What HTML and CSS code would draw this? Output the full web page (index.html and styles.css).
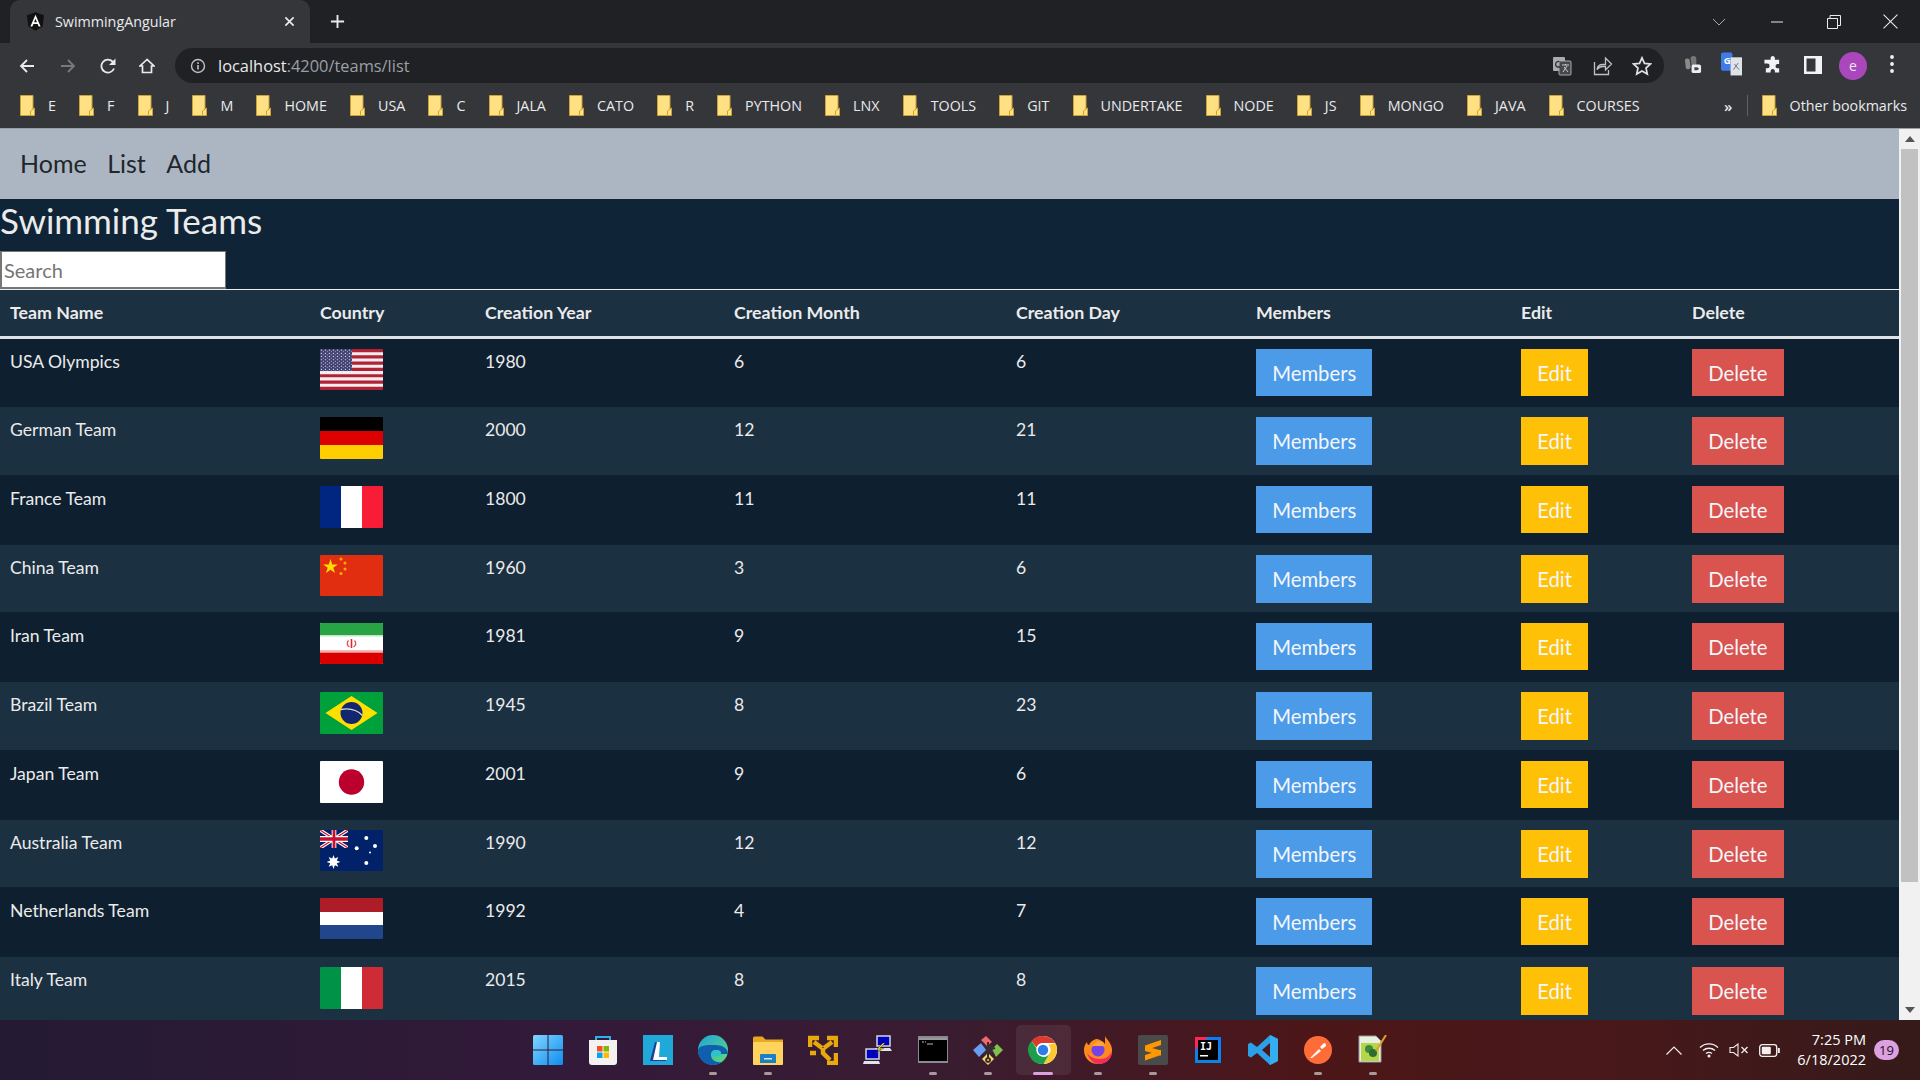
FILE: index.html
```html
<!DOCTYPE html>
<html lang="en">
<head>
<meta charset="utf-8">
<title>SwimmingAngular</title>
<link rel="stylesheet" href="styles.css">
</head>
<body>
<svg class="defs" width="0" height="0" aria-hidden="true">
  <defs>
    <symbol id="folder" viewBox="0 0 15 21">
      <path d="M.5.5h12.5v20H.5z" fill="#ffe083" stroke="#c9a23a"/>
      <path d="M14.500 13v7.500H10.500V16z" fill="#ffe083" stroke="#c9a23a"/>
    </symbol>
    <pattern id="stars" width="4" height="3.200" patternUnits="userSpaceOnUse">
      <rect x=".8" y=".6" width="1.300" height="1.100" fill="#d7d9e6"/>
      <rect x="2.800" y="2.200" width="1.100" height=".9" fill="#b8bbd0"/>
    </pattern>
    <symbol id="uj" viewBox="0 0 60 30" preserveAspectRatio="none">
      <rect width="60" height="30" fill="#012169"/>
      <path d="M0 0l60 30M60 0L0 30" stroke="#fff" stroke-width="6"/>
      <path d="M0 0l60 30M60 0L0 30" stroke="#c8102e" stroke-width="2"/>
      <path d="M30 0v30M0 15h60" stroke="#fff" stroke-width="10"/>
      <path d="M30 0v30M0 15h60" stroke="#c8102e" stroke-width="6"/>
    </symbol>
  </defs>
</svg>

<header class="tabstrip">
  <div class="tab">
    <svg class="favicon" viewBox="0 0 20 22"><path d="M10 0L0 3.500l1.600 13.300L10 22l8.400-5.200L20 3.500z" fill="#111"/><path d="M10 3L4 17h2.300l1.200-3h5l1.200 3H16zm-1.700 9L10 7.800 11.700 12z" fill="#fff"/></svg>
    <span class="tab-title">SwimmingAngular</span>
    <svg class="tab-close" viewBox="0 0 12 12"><path d="M1.500 1.500l9 9M10.500 1.500l-9 9" stroke="#e8eaed" stroke-width="1.800"/></svg>
  </div>
  <svg class="new-tab" viewBox="0 0 16 16"><path d="M8 1v14M1 8h14" stroke="#e8eaed" stroke-width="2"/></svg>
  <div class="window-controls">
    <svg class="wc chevron" viewBox="0 0 14 8"><path d="M1 1l6 6 6-6" fill="none" stroke="#aaa" stroke-width="1"/></svg>
    <svg class="wc min" viewBox="0 0 14 14"><path d="M1 7h12" stroke="#e8eaed" stroke-width="1"/></svg>
    <svg class="wc restore" viewBox="0 0 14 14"><path d="M.5 3.500h10v10H.5zM3 3.500V.5h10.500v10H10.500" fill="none" stroke="#e8eaed"/></svg>
    <svg class="wc close" viewBox="0 0 14 14"><path d="M.5.5l13 13M13.500.5l-13 13" stroke="#e8eaed"/></svg>
  </div>
</header>

<div class="toolbar">
  <svg class="tb back" viewBox="0 0 16 16"><path d="M15 8H2M8 2L2 8l6 6" fill="none" stroke="#e8eaed" stroke-width="1.800"/></svg>
  <svg class="tb fwd" viewBox="0 0 16 16"><path d="M1 8h13M8 2l6 6-6 6" fill="none" stroke="#77797c" stroke-width="1.800"/></svg>
  <svg class="tb reload" viewBox="0 0 16 16"><path d="M14 10.500A6.500 6.500 0 1 1 12.500 3.500L14 5" fill="none" stroke="#e8eaed" stroke-width="1.800"/><path d="M15.500 .5v6.500H9z" fill="#e8eaed"/></svg>
  <svg class="tb home" viewBox="0 0 16 16"><path d="M8 1.500L1 8h2.500v6.500h9V8H15z" fill="none" stroke="#e8eaed" stroke-width="1.700"/></svg>
  <div class="omnibox">
    <svg class="info" viewBox="0 0 16 16"><circle cx="8" cy="8" r="6.500" fill="none" stroke="#bdc1c6" stroke-width="1.400"/><path d="M7.200 7h1.600v4.500H7.200zM7.200 4.300h1.600v1.600H7.200z" fill="#bdc1c6"/></svg>
    <span class="url"><span class="host">localhost</span>:4200/teams/list</span>
    <svg class="omni-icon translate" viewBox="0 0 20 20"><rect x="1" y="1" width="12" height="14" rx="1" fill="#a9abad"/><rect x="7" y="5" width="12" height="14" rx="1" fill="#45474a" stroke="#a9abad"/><path d="M9.500 3.500A3 3 0 1 0 10 9H7" fill="none" stroke="#333" stroke-width="1.300" transform="translate(-2 2)"/><path d="M10 9h7M13.500 8v1M11 16l4-6M12 11l4 5" stroke="#c8cacc" stroke-width="1" fill="none"/></svg>
    <svg class="omni-icon share" viewBox="0 0 20 20"><path d="M13 9.500H10c-3 0-5 2-5.500 5 1.500-2 3-3 5.500-3h3v3.500l6-6-6-6v3.500z" fill="none" stroke="#bdc1c6" stroke-width="1.300" transform="translate(-.5 -1)"/><path d="M1.500 6v12.500h14V14" fill="none" stroke="#bdc1c6" stroke-width="1.300"/></svg>
    <svg class="omni-icon star" viewBox="0 0 20 20"><path d="M10 1.800l2.500 5.600 6 .6-4.500 4 1.300 6-5.300-3.100L4.700 18l1.300-6-4.500-4 6-.6z" fill="none" stroke="#dfe1e5" stroke-width="1.700"/></svg>
  </div>
  <svg class="ext ext-a" viewBox="0 0 20 20"><path d="M2 5a3 3 0 0 1 5 0l1 8a3 3 0 0 1-5 1z" fill="#8a8a8a"/><path d="M8 4a3 3 0 0 1 6 0v7H9z" fill="#777"/><rect x="9" y="10" width="10" height="9" rx="2" fill="#eee"/><path d="M12 13h3l2 1.500-2 1.500h-3z" fill="#444"/></svg>
  <svg class="ext ext-b" viewBox="0 0 22 24"><path d="M2 0h9l1 2v17H2a2 2 0 0 1-2-2V2a2 2 0 0 1 2-2z" fill="#3f7cea"/><rect x="10" y="5" width="12" height="19" fill="#dfe3e8"/><text class="ext-g" x="3" y="12">G</text><path d="M13 18l5-7M14 12l5 6" stroke="#6b7480"/></svg>
  <svg class="ext puzzle" viewBox="0 0 20 20"><path d="M8 3a2.300 2.300 0 0 1 4.500 0V5H17v4.500h-2a2.300 2.300 0 0 0 0 4.500h2v4.500H12.500v-2a2.300 2.300 0 0 0-4.500 0v2H3v-4.500h1.500a2.500 2.500 0 0 0 0-5H1.500V5H8z" fill="#f1f3f4"/></svg>
  <svg class="ext side" viewBox="0 0 18 18"><path d="M0 0h18v18H0zM2.500 2.500v13h9v-13z" fill="#f1f3f4" fill-rule="evenodd"/></svg>
  <div class="avatar">e</div>
  <svg class="menu" viewBox="0 0 4 18"><circle cx="2" cy="2" r="1.900" fill="#f1f3f4"/><circle cx="2" cy="9" r="1.900" fill="#f1f3f4"/><circle cx="2" cy="16" r="1.900" fill="#f1f3f4"/></svg>
</div>

<nav class="bookmarks">
  <a class="bm"><svg class="bm-folder"><use href="#folder"/></svg><span>E</span></a>
  <a class="bm"><svg class="bm-folder"><use href="#folder"/></svg><span>F</span></a>
  <a class="bm"><svg class="bm-folder"><use href="#folder"/></svg><span>J</span></a>
  <a class="bm"><svg class="bm-folder"><use href="#folder"/></svg><span>M</span></a>
  <a class="bm"><svg class="bm-folder"><use href="#folder"/></svg><span>HOME</span></a>
  <a class="bm"><svg class="bm-folder"><use href="#folder"/></svg><span>USA</span></a>
  <a class="bm"><svg class="bm-folder"><use href="#folder"/></svg><span>C</span></a>
  <a class="bm"><svg class="bm-folder"><use href="#folder"/></svg><span>JALA</span></a>
  <a class="bm"><svg class="bm-folder"><use href="#folder"/></svg><span>CATO</span></a>
  <a class="bm"><svg class="bm-folder"><use href="#folder"/></svg><span>R</span></a>
  <a class="bm"><svg class="bm-folder"><use href="#folder"/></svg><span>PYTHON</span></a>
  <a class="bm"><svg class="bm-folder"><use href="#folder"/></svg><span>LNX</span></a>
  <a class="bm"><svg class="bm-folder"><use href="#folder"/></svg><span>TOOLS</span></a>
  <a class="bm"><svg class="bm-folder"><use href="#folder"/></svg><span>GIT</span></a>
  <a class="bm"><svg class="bm-folder"><use href="#folder"/></svg><span>UNDERTAKE</span></a>
  <a class="bm"><svg class="bm-folder"><use href="#folder"/></svg><span>NODE</span></a>
  <a class="bm"><svg class="bm-folder"><use href="#folder"/></svg><span>JS</span></a>
  <a class="bm"><svg class="bm-folder"><use href="#folder"/></svg><span>MONGO</span></a>
  <a class="bm"><svg class="bm-folder"><use href="#folder"/></svg><span>JAVA</span></a>
  <a class="bm"><svg class="bm-folder"><use href="#folder"/></svg><span>COURSES</span></a>
  <span class="bm-more">»</span>
  <span class="bm-sep"></span>
  <a class="bm bm-other"><svg class="bm-folder"><use href="#folder"/></svg><span>Other bookmarks</span></a>
</nav>

<div class="viewport">
  <main class="page">
    <div class="navbar">
      <a class="nav-link">Home</a>
      <a class="nav-link">List</a>
      <a class="nav-link">Add</a>
    </div>
    <h2 class="title">Swimming Teams</h2>
    <input class="search" type="text" placeholder="Search">
    <table class="teams">
      <thead>
        <tr><th>Team Name</th><th>Country</th><th>Creation Year</th><th>Creation Month</th><th>Creation Day</th><th>Members</th><th>Edit</th><th>Delete</th></tr>
      </thead>
      <tbody>
        <tr>
          <td>USA Olympics</td>
          <td><svg class="flag" viewBox="0 0 63 41">
            <rect width="63" height="41" fill="#b22234"/>
            <path d="M0 4.700h63M0 11h63M0 17.300h63M0 23.600h63M0 29.900h63M0 36.200h63" stroke="#f2eef0" stroke-width="3.100"/>
            <rect width="32" height="22" fill="#3c3b6e"/><rect width="32" height="22" fill="url(#stars)"/>
          </svg></td>
          <td>1980</td><td>6</td><td>6</td>
          <td><button class="btn members">Members</button></td><td><button class="btn edit">Edit</button></td><td><button class="btn delete">Delete</button></td>
        </tr>
        <tr>
          <td>German Team</td>
          <td><svg class="flag" viewBox="0 0 63 42"><rect width="63" height="14" fill="#000"/><rect y="14" width="63" height="14" fill="#dd0000"/><rect y="28" width="63" height="14" fill="#ffce00"/></svg></td>
          <td>2000</td><td>12</td><td>21</td>
          <td><button class="btn members">Members</button></td><td><button class="btn edit">Edit</button></td><td><button class="btn delete">Delete</button></td>
        </tr>
        <tr>
          <td>France Team</td>
          <td><svg class="flag" viewBox="0 0 63 42"><rect width="21" height="42" fill="#002681"/><rect x="21" width="21" height="42" fill="#fff"/><rect x="42" width="21" height="42" fill="#f81c36"/></svg></td>
          <td>1800</td><td>11</td><td>11</td>
          <td><button class="btn members">Members</button></td><td><button class="btn edit">Edit</button></td><td><button class="btn delete">Delete</button></td>
        </tr>
        <tr>
          <td>China Team</td>
          <td><svg class="flag" viewBox="0 0 63 41">
            <rect width="63" height="41" fill="#e12d10"/>
            <path d="M10.500 4l1.700 5.400h5.600l-4.500 3.300 1.700 5.300-4.500-3.300L6 18l1.700-5.300-4.500-3.300h5.600z" fill="#ffde00"/>
            <circle cx="21" cy="4" r="1.500" fill="#f7b500"/><circle cx="25" cy="8" r="1.500" fill="#f7b500"/><circle cx="25" cy="14" r="1.500" fill="#f7b500"/><circle cx="21" cy="18.500" r="1.500" fill="#f7b500"/>
          </svg></td>
          <td>1960</td><td>3</td><td>6</td>
          <td><button class="btn members">Members</button></td><td><button class="btn edit">Edit</button></td><td><button class="btn delete">Delete</button></td>
        </tr>
        <tr>
          <td>Iran Team</td>
          <td><svg class="flag" viewBox="0 0 63 41">
            <rect width="63" height="41" fill="#fff"/><rect width="63" height="12" fill="#29a445"/><rect y="12" width="63" height="1.500" fill="#bfe3c6"/>
            <rect y="27" width="63" height="1.500" fill="#f6b9b9"/><rect y="30" width="63" height="11" fill="#da0000"/><rect y="28.500" width="63" height="1.500" fill="#ee8080"/>
            <path d="M28.500 17.500c-2 2-1.500 5.500 1 6.500M34.500 17.500c2 2 1.500 5.500-1 6.500" fill="none" stroke="#e2484a" stroke-width="1.300"/><rect x="30.700" y="16" width="1.600" height="9" fill="#d92b2d"/>
          </svg></td>
          <td>1981</td><td>9</td><td>15</td>
          <td><button class="btn members">Members</button></td><td><button class="btn edit">Edit</button></td><td><button class="btn delete">Delete</button></td>
        </tr>
        <tr>
          <td>Brazil Team</td>
          <td><svg class="flag" viewBox="0 0 63 42">
            <rect width="63" height="42" fill="#00a03b"/><path d="M5.500 21L31.500 4l26 17-26 17z" fill="#fedf00"/>
            <circle cx="31.500" cy="21" r="11" fill="#13266f"/><path d="M21 17.500c8-1.500 16 .5 21.500 6" fill="none" stroke="#cfe0cf" stroke-width="1.300"/>
          </svg></td>
          <td>1945</td><td>8</td><td>23</td>
          <td><button class="btn members">Members</button></td><td><button class="btn edit">Edit</button></td><td><button class="btn delete">Delete</button></td>
        </tr>
        <tr>
          <td>Japan Team</td>
          <td><svg class="flag" viewBox="0 0 63 42"><rect width="63" height="42" fill="#fff"/><circle cx="31.500" cy="21" r="12.700" fill="#bc002d"/></svg></td>
          <td>2001</td><td>9</td><td>6</td>
          <td><button class="btn members">Members</button></td><td><button class="btn edit">Edit</button></td><td><button class="btn delete">Delete</button></td>
        </tr>
        <tr>
          <td>Australia Team</td>
          <td><svg class="flag" viewBox="0 0 63 41">
            <rect width="63" height="41" fill="#012169"/><use href="#uj" width="28" height="18"/>
            <path d="M13.500 25l1.300 3.600 3.500-1.500-1.500 3.500 3.600 1.400-3.600 1.300 1.500 3.500-3.500-1.500-1.300 3.600-1.300-3.600-3.500 1.500 1.500-3.500-3.600-1.300 3.600-1.400-1.500-3.500 3.500 1.500z" fill="#fff"/>
            <circle cx="46.300" cy="8" r="2" fill="#fff"/><circle cx="36.700" cy="18.300" r="2" fill="#fff"/><circle cx="55" cy="16" r="2" fill="#fff"/><circle cx="50" cy="22.500" r="1" fill="#fff"/><circle cx="46.300" cy="33" r="2" fill="#fff"/>
          </svg></td>
          <td>1990</td><td>12</td><td>12</td>
          <td><button class="btn members">Members</button></td><td><button class="btn edit">Edit</button></td><td><button class="btn delete">Delete</button></td>
        </tr>
        <tr>
          <td>Netherlands Team</td>
          <td><svg class="flag" viewBox="0 0 63 41"><rect width="63" height="14" fill="#ae1c28"/><rect y="14" width="63" height="13.500" fill="#fff"/><rect y="27" width="63" height="14" fill="#21468b"/></svg></td>
          <td>1992</td><td>4</td><td>7</td>
          <td><button class="btn members">Members</button></td><td><button class="btn edit">Edit</button></td><td><button class="btn delete">Delete</button></td>
        </tr>
        <tr>
          <td>Italy Team</td>
          <td><svg class="flag" viewBox="0 0 63 42"><rect width="21" height="42" fill="#009246"/><rect x="21" width="21" height="42" fill="#fff"/><rect x="42" width="21" height="42" fill="#ce2b37"/></svg></td>
          <td>2015</td><td>8</td><td>8</td>
          <td><button class="btn members">Members</button></td><td><button class="btn edit">Edit</button></td><td><button class="btn delete">Delete</button></td>
        </tr>
      </tbody>
    </table>
  </main>
  <aside class="scrollbar">
    <div class="sb-arrow"><svg class="sb-tri" viewBox="0 0 10 6"><path d="M5 0l5 6H0z" fill="#555"/></svg></div>
    <div class="sb-track"><div class="sb-thumb"></div></div>
    <div class="sb-arrow"><svg class="sb-tri" viewBox="0 0 10 6"><path d="M0 0h10L5 6z" fill="#555"/></svg></div>
  </aside>
</div>

<footer class="taskbar">
  <div class="tb-side"></div>
  <div class="tb-apps">
    <div class="app"><svg class="ti" viewBox="0 0 30 30"><defs><linearGradient id="w" x1="0" y1="0" x2="1" y2="1"><stop offset="0" stop-color="#7fd6ff"/><stop offset="1" stop-color="#0f8cf0"/></linearGradient></defs><path d="M0 1.500A1.500 1.500 0 0 1 1.500 0h13v14.500H0zM15.500 0h13A1.500 1.500 0 0 1 30 1.500v13H15.500zM0 15.500h14.500V30h-13A1.500 1.500 0 0 1 0 28.500zM15.500 15.500H30v13a1.500 1.500 0 0 1-1.500 1.500h-13z" fill="url(#w)"/></svg></div>
    <div class="app"><svg class="ti" viewBox="0 0 30 30"><path d="M8 5V2h14v3" fill="none" stroke="#2bb4ea" stroke-width="2"/><path d="M1 5h28v22a3 3 0 0 1-3 3H4a3 3 0 0 1-3-3z" fill="#f4f2f0"/><rect x="9" y="11" width="5.500" height="5.500" fill="#f25022"/><rect x="15.500" y="11" width="5.500" height="5.500" fill="#7fba00"/><rect x="9" y="17.500" width="5.500" height="5.500" fill="#00a4ef"/><rect x="15.500" y="17.500" width="5.500" height="5.500" fill="#ffb900"/></svg></div>
    <div class="app"><svg class="ti" viewBox="0 0 30 30"><rect width="30" height="30" fill="#1fa8d8"/><path d="M12 7h4l-1 15h8v4H7z" fill="#1d3f9a"/><path d="M14 7h3l-1 15h8v3H10z" fill="#fff"/></svg></div>
    <div class="app"><svg class="ti" viewBox="0 0 30 30"><defs><linearGradient id="e" x1="0" y1="0" x2="1" y2="1"><stop offset="0" stop-color="#1fa4d8"/><stop offset="1" stop-color="#5fdc7a"/></linearGradient></defs><circle cx="15" cy="15" r="15" fill="url(#e)"/><path d="M0 15C0 24 7 30 15 30c4 0 7-1 9-3-6 1-11-2-11-7 0-3 2-5 5-5 4 0 5 2 5 4h7c0-6-6-9-13-9C8 10 2 10 0 15z" fill="#0f5fae"/><path d="M13 20c0-3 2-5 5-5 3 0 5 1 5 3 1 3-3 3-5 3h-5z" fill="#30c0c8"/></svg><i class="dot"></i></div>
    <div class="app"><svg class="ti" viewBox="0 0 30 30"><path d="M0 3a1.500 1.500 0 0 1 1.500-1.500h8l3 3H30V29H0z" fill="#e8a820"/><rect y="7" width="30" height="23" rx="1" fill="#ffd35c"/><path d="M8 19h14a1 1 0 0 1 1 1v8H7v-8a1 1 0 0 1 1-1z" fill="#1c7fc4"/><rect x="11" y="23" width="8" height="1.500" fill="#cfe8f8"/></svg><i class="dot"></i></div>
    <div class="app"><svg class="ti" viewBox="0 0 30 30"><path d="M2 12V3h9M28 12V3h-9M28 18v10h-9M2 18h6M6 7l8 6M24 7l-8 6M15 13v5l7 7" fill="none" stroke="#e8a90c" stroke-width="4.500"/></svg></div>
    <div class="app"><svg class="ti" viewBox="0 0 30 30"><rect x="14" y="1" width="13" height="10" fill="#0000c0" stroke="#cfd6e0" stroke-width="1.500"/><path d="M12 13h15l2 3H14z" fill="#dfe4ec"/><rect x="3" y="14" width="13" height="10" fill="#0000c0" stroke="#cfd6e0" stroke-width="1.500"/><path d="M1 26h15l1 3H0z" fill="#dfe4ec"/><path d="M20 8l-6 6h4l-6 5 9-6h-4l5-5z" fill="#ffe900" stroke="#222" stroke-width=".4"/></svg></div>
    <div class="app"><svg class="ti" viewBox="0 0 30 30"><rect y="2" width="30" height="25" fill="#000" stroke="#8a8a8e" stroke-width="2"/><rect x="1" y="3" width="28" height="2" fill="#9a9a9e"/><path d="M4 7h2M7 7h1M9 9h6" stroke="#bbb"/></svg><i class="dot"></i></div>
    <div class="app"><svg class="ti" viewBox="0 0 30 30"><path d="M15 7L23 15 15 23 7 15z" fill="#3a2a38"/><path d="M8 5l5-4 6 6-5 4z" fill="#ee6a6a"/><path d="M19 14l5-5 6 6-7 7z" fill="#7fbf4a"/><path d="M8 8L0 15l6 7 7-7z" fill="#6a9df2"/><path d="M9 24l6-6 6 6-6 6z" fill="#f5d76a"/><path d="M15 7v16M15 15l7-2M15 23a2 2 0 1 0 .1 0" stroke="#3a2a30" stroke-width="2" fill="none"/></svg><i class="dot"></i></div>
    <div class="app app-active"><svg class="ti" viewBox="0 0 30 30"><circle cx="15" cy="15" r="14" fill="#fff"/><path d="M15 1a14 14 0 0 1 12.100 7H15a7 7 0 0 0-6.500 4.400L3.500 6A14 14 0 0 1 15 1z" fill="#db3a30"/><path d="M27.100 8A14 14 0 0 1 15.500 29l6-10.500A7 7 0 0 0 20.500 10z" fill="#fcc934"/><path d="M3.500 6A14 14 0 0 0 15.500 29l6-10.500a7 7 0 0 1-12.800-5z" fill="#1e9e4a"/><circle cx="15" cy="15" r="6.500" fill="#fff"/><circle cx="15" cy="15" r="5.200" fill="#2b7be8"/></svg><i class="dot dot-active"></i></div>
    <div class="app"><svg class="ti" viewBox="0 0 30 30"><path d="M22 1c1 3 6 6 7 13 1 9-6 15-14 15S1 23 1 15c0-3 1-6 3-8 0 2 1 3 2 3 1-3 4-5 7-6 3 0 7 2 9 5 0-3 0-5 0-8z" fill="#ff8a1e"/><path d="M4 18c2 6 6 11 12 11 7 0 13-5 13-13-2 5-6 8-12 8-5 0-10-2-13-6z" fill="#f22c5e"/><circle cx="15" cy="15" r="6.500" fill="#7542e5"/><path d="M9 11h13l-2-4C16 5 11 7 9 11z" fill="#ffa436"/></svg><i class="dot"></i></div>
    <div class="app"><svg class="ti" viewBox="0 0 30 30"><rect width="30" height="30" rx="2" fill="#4a4a4a"/><path d="M7 10.500L23 5v5L7 15.500zM7 11l16 4.500v5L7 16zM7 20l16-5v5L7 25.500z" fill="#ff9800"/></svg><i class="dot"></i></div>
    <div class="app"><svg class="ti ti-ij" viewBox="0 0 26 26"><rect width="26" height="26" fill="#0a84e8"/><path d="M0 0h13L0 13z" fill="#fe2857"/><path d="M26 13V0H13z" fill="#087cfa"/><rect x="3" y="3" width="20" height="20" fill="#000"/><text class="ij" x="5" y="13">IJ</text><rect x="5" y="18" width="8" height="1.500" fill="#fff"/></svg></div>
    <div class="app"><svg class="ti" viewBox="0 0 30 30"><path d="M22 0l8 4v22l-8 4L9 18l-6 4.500L0 21v-12l3-1.500L9 12z M22 8l-8 7 8 7z" fill="#2b9fe8" fill-rule="evenodd"/><path d="M22 0l8 4v22l-8 4z" fill="#35aef0"/></svg></div>
    <div class="app"><svg class="ti" viewBox="0 0 30 30"><circle cx="15" cy="15" r="14" fill="#ff6c37"/><path d="M7 23l9-9 2 2-9 7zM17 12l4-4c2 0 2 2 2 3l-4 3z" fill="#fff"/></svg><i class="dot"></i></div>
    <div class="app"><svg class="ti" viewBox="0 0 30 30"><path d="M1 1h17l5 5v21H1z" fill="#e8f0e0" stroke="#99a"/><rect x="3" y="8" width="18" height="18" fill="#b5d64a"/><circle cx="11" cy="14" r="4" fill="#3c8a3a"/><circle cx="15" cy="18" r="4" fill="#2d6e30"/><path d="M28 0L18 16" stroke="#d9a22a" stroke-width="2"/></svg><i class="dot"></i></div>
  </div>
  <div class="tb-side tray">
    <svg class="tray-i up" viewBox="0 0 16 9"><path d="M.5 8.500L8 1l7.500 7.500" fill="none" stroke="#f0ecec" stroke-width="1.200"/></svg>
    <svg class="tray-i wifi" viewBox="0 0 20 16"><path d="M1 5.500a13 13 0 0 1 18 0M4 8.500a9 9 0 0 1 12 0M7 11.500a5 5 0 0 1 6 0" fill="none" stroke="#f5f0f0" stroke-width="1.400"/><circle cx="10" cy="14" r="1.500" fill="#f5f0f0"/></svg>
    <svg class="tray-i vol" viewBox="0 0 20 14"><path d="M1 4.500h3.500L9 1v12L4.500 9.500H1z" fill="none" stroke="#f0ecec" stroke-width="1.100"/><path d="M12.500 4l6 6M18.500 4l-6 6" stroke="#f0ecec" stroke-width="1.300"/></svg>
    <svg class="tray-i batt" viewBox="0 0 21 13"><rect x=".7" y=".7" width="17" height="11.600" rx="2.500" fill="none" stroke="#f5f0f0" stroke-width="1.300"/><rect x="2.800" y="2.800" width="9" height="7.400" rx="1" fill="#f5f0f0"/><rect x="18.800" y="4" width="2" height="5" fill="#f5f0f0"/></svg>
    <div class="clock"><span>7:25 PM</span><span>6/18/2022</span></div>
    <div class="badge">19</div>
  </div>
</footer>
</body>
</html>
```

FILE: styles.css
```css
* { box-sizing: border-box; }
html, body { margin: 0; height: 100%; }
body {
  width: 1920px;
  height: 1080px;
  overflow: hidden;
  display: flex;
  flex-direction: column;
  background: #0f2537;
  font-family: "Lato", sans-serif;
  color: #ebebeb;
}
.defs { display: block; height: 0; }
svg { display: block; flex: none; }

/* Browser chrome */
.tabstrip {
  height: 43px;
  flex: none;
  display: flex;
  align-items: center;
  background: #202124;
  padding-left: 10px;
}
.tab {
  width: 300px;
  height: 43px;
  background: #35363a;
  border-radius: 10px 10px 0 0;
  display: flex;
  align-items: center;
  padding-left: 17px;
}
.favicon { width: 17px; height: 19px; margin-right: 11px; }
.tab-title {
  font: 14.300px "Open Sans", sans-serif;
  color: #e8eaed;
  white-space: nowrap;
}
.tab-close { width: 11px; height: 11px; margin-left: auto; margin-right: 15px; }
.new-tab { width: 15px; height: 15px; margin-left: 20px; }
.window-controls { margin-left: auto; display: flex; align-items: center; height: 36px; padding-right: 22px; }
.wc { width: 14px; height: 14px; }
.chevron { width: 14px; height: 8px; margin-right: 44px; }
.min { margin-right: 43px; }
.restore { margin-right: 42px; }
.close { width: 15px; height: 15px; }

.toolbar {
  height: 40px;
  flex: none;
  background: #35363a;
  display: flex;
  align-items: flex-end;
  padding: 0 0 0 19px;
}
.toolbar > svg { margin-bottom: 9px; }
.tb { width: 16px; height: 16px; }
.fwd { margin-left: 25px; }
.reload { margin-left: 24px; }
.home { margin-left: 23px; }
.omnibox {
  margin-left: 20px;
  width: 1489px;
  height: 35px;
  border-radius: 18px;
  background: #202124;
  display: flex;
  align-items: center;
  padding-left: 15px;
}
.info { width: 16px; height: 16px; }
.url {
  margin-left: 12px;
  font: 16.400px "Open Sans", sans-serif;
  color: #9aa0a6;
  white-space: nowrap;
}
.host { color: #e8eaed; }
.omni-icon { width: 20px; height: 20px; }
.translate { margin-left: auto; }
.share { margin-left: 21px; }
.star { margin-left: 19px; margin-right: 12px; }
.ext { width: 19px; height: 19px; }
.ext-a { margin-left: 19px; }
.ext-b { margin-left: 19px; width: 21px; height: 24px; }
.toolbar > .ext-b { margin-bottom: 7px; }
.ext-g { font: bold 10px "Open Sans", sans-serif; fill: #fff; }
.puzzle { margin-left: 21px; }
.side { margin-left: 22px; width: 18px; height: 18px; }
.avatar {
  margin-left: 17px;
  margin-bottom: 3px;
  width: 28px;
  height: 28px;
  border-radius: 50%;
  background: #aa47bc;
  color: #f3e5f5;
  font: 14px/27px "Open Sans", sans-serif;
  text-align: center;
}
.menu { width: 4px; height: 18px; margin-left: 23px; }
.toolbar > .menu { margin-bottom: 10px; }

.bookmarks {
  height: 46px;
  flex: none;
  background: #35363a;
  border-bottom: 1px solid #9aa0a6;
  display: flex;
  align-items: center;
  padding-left: 20px;
  gap: 23.100px;
  font: 14.300px "Open Sans", sans-serif;
  color: #e8eaed;
}
.bm { display: flex; align-items: center; gap: 13px; white-space: nowrap; }
.bm-folder { width: 15px; height: 21px; }
.bm-more { margin-left: auto; margin-right: -9px; font-size: 15px; font-weight: 600; }
.bm-sep { width: 1px; height: 21px; background: #5f6368; margin-right: -9px; }
.bm-other { margin-right: 13px; }

/* Page */
.viewport { flex: 1; min-height: 0; display: flex; overflow: hidden; }
.page { flex: 1; min-width: 0; background: #0f2537; }
.navbar {
  height: 70px;
  background: #abb6c2;
  display: flex;
  align-items: center;
  padding: 0 0 2px 20px;
  gap: 20.500px;
}
.nav-link { font-size: 25px; color: #20262b; }
.title {
  margin: 0;
  height: 52px;
  font-size: 35px;
  line-height: 42px;
  font-weight: 400;
  color: #ebebeb;
}
.search {
  display: block;
  width: 226px;
  height: 38px;
  border: 1px solid #767676;
  border-width: 1px 1px 2px 2px;
  background: #fff;
  padding: 0 2px;
  font: 20px "Lato", sans-serif;
  outline: none;
}
.search::placeholder { color: #757575; }
.teams {
  width: 1899px;
  table-layout: fixed;
  border-collapse: separate;
  border-spacing: 0;
  font-size: 17.600px;
}
.teams th {
  height: 50px;
  background: #1b3041;
  border-top: 1px solid #ebebeb;
  border-bottom: 3px solid #dee2e6;
  text-align: left;
  padding: 0 10px 2px;
  font-weight: 700;
  font-size: 17.800px;
}
.teams th:nth-child(1) { width: 310px; }
.teams th:nth-child(2) { width: 165px; }
.teams th:nth-child(3) { width: 249px; }
.teams th:nth-child(4) { width: 282px; }
.teams th:nth-child(5) { width: 240px; }
.teams th:nth-child(6) { width: 265px; }
.teams th:nth-child(7) { width: 171px; }
.teams td {
  height: 68px;
  padding: 10px 10px 0;
  vertical-align: top;
  line-height: 26px;
}
.teams tbody tr:nth-child(odd):not(:first-child) td { height: 70px; padding-top: 11px; }
.teams tbody tr:nth-child(4n) td { height: 67px; }
.teams tbody tr:nth-child(even) td { background: #1b3041; }
.teams tbody tr:nth-child(odd) td { background: #0e2030; }
.flag { width: 63px; height: auto; border-radius: 1px; }
.btn {
  display: block;
  height: 47px;
  border: 0;
  padding: 0 16.200px;
  font: 20.300px "Lato", sans-serif;
  color: #f3f6fa;
}
.teams tbody tr:nth-child(even) .btn { height: 48px; }
.members { background: #4c9be8; }
.edit { background: #ffc107; }
.delete { background: #d9534f; }

.scrollbar { width: 21px; flex: none; display: flex; flex-direction: column; background: #f1f1f1; }
.sb-arrow { height: 20px; flex: none; display: flex; align-items: center; justify-content: center; }
.sb-tri { width: 10px; height: 6px; }
.sb-track { flex: 1; padding: 0 2px; }
.sb-thumb { height: 733px; background: #c1c1c1; }

/* Taskbar */
.taskbar {
  height: 60px;
  flex: none;
  display: grid;
  grid-template-columns: 1fr auto 1fr;
  background: linear-gradient(90deg, #241a33 0%, #331a3a 30%, #3a1c30 50%, #4c1618 68%, #47181a 85%, #351a1a 100%);
}
.tb-apps { display: flex; align-items: stretch; margin-left: 1px; }
.app { width: 55px; display: flex; flex-direction: column; align-items: center; padding-top: 15px; position: relative; }
.ti { width: 30px; height: 30px; }
.ti-ij { width: 26px; height: 26px; margin-top: 2px; }
.ij { font: bold 10px "DejaVu Sans Mono", monospace; fill: #fff; }
.dot { position: absolute; bottom: 5px; width: 8px; height: 3px; border-radius: 2px; background: #a89a9a; }
.app-active { background: rgba(255, 255, 255, .07); border-radius: 5px; margin: 5px 0; padding-top: 10px; }
.dot-active { width: 20px; background: #dda0e0; bottom: 0; }
.tray { display: flex; align-items: center; justify-content: flex-end; color: #fff; padding-right: 21px; }
.tray-i { flex: none; }
.up { width: 16px; height: 9px; }
.wifi { width: 20px; height: 16px; margin-left: 17px; }
.vol { width: 20px; height: 14px; margin-left: 10px; }
.batt { width: 21px; height: 13px; margin-left: 10px; }
.clock {
  margin-left: 10px;
  width: 76px;
  display: flex;
  flex-direction: column;
  align-items: flex-end;
  font: 14.500px/20px "Open Sans", sans-serif;
}
.badge {
  margin-left: 8px;
  width: 25px;
  height: 20px;
  border-radius: 10px;
  background: #dda0e0;
  color: #201020;
  font: 13px/20px "Open Sans", sans-serif;
  text-align: center;
}
```
